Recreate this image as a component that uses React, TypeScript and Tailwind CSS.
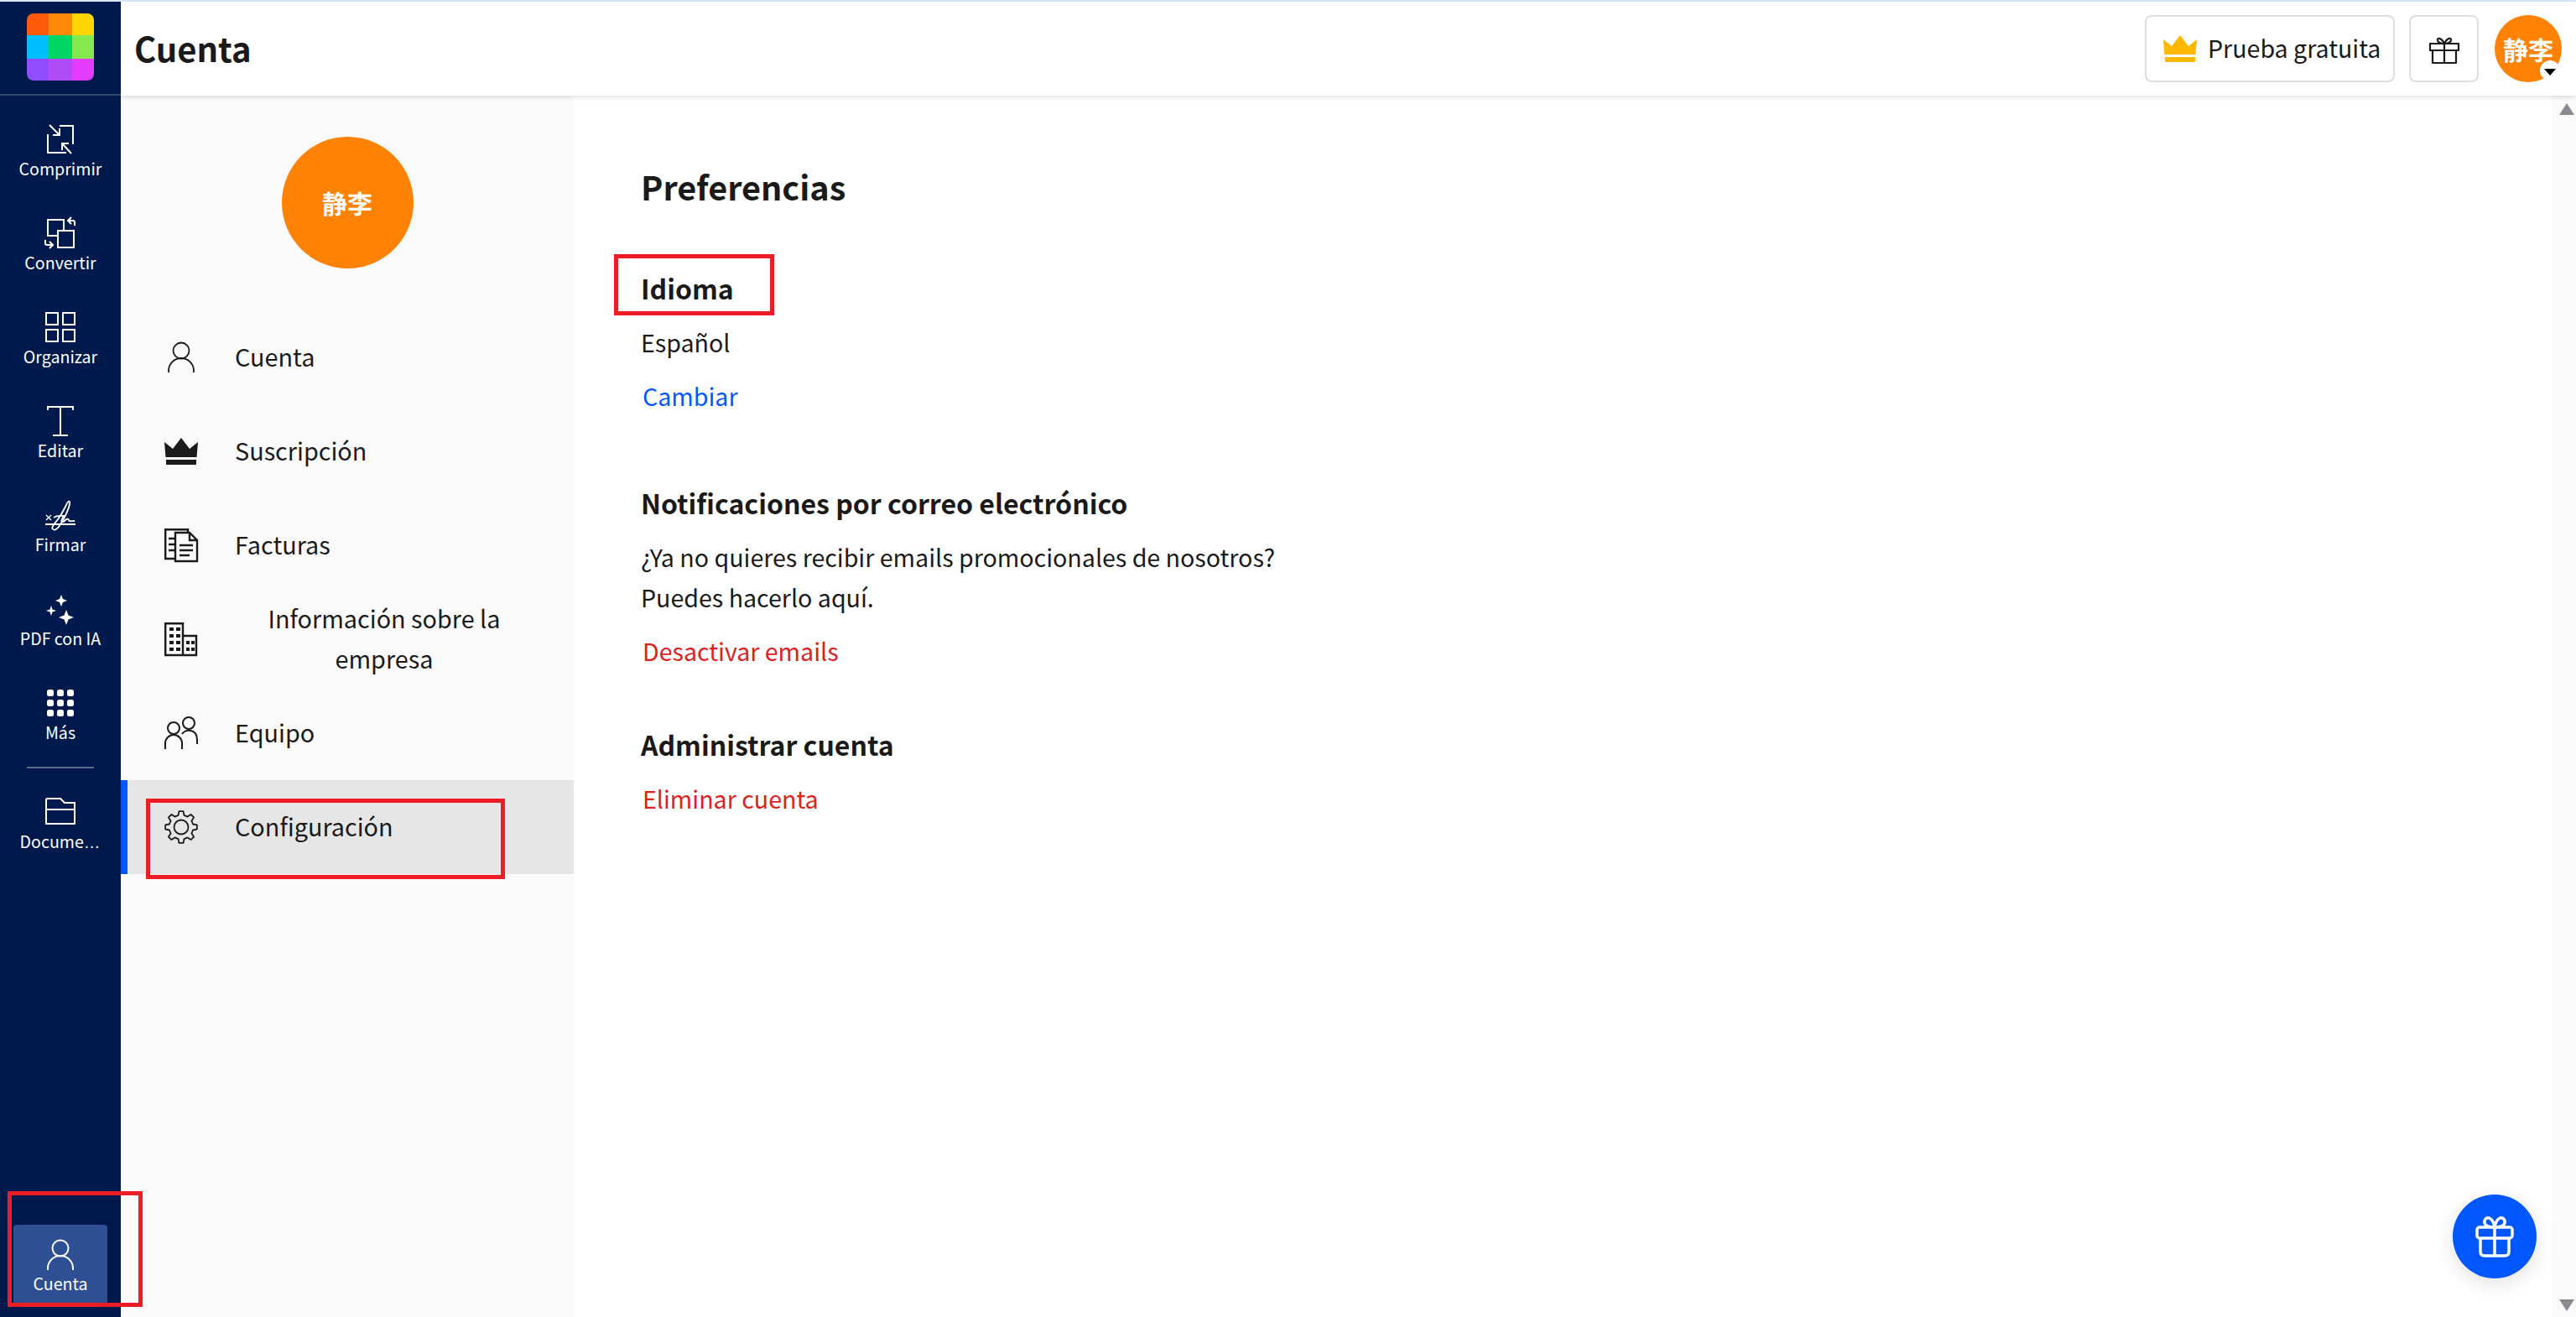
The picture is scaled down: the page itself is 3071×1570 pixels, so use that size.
import type { ReactNode } from 'react'

// ── icons ─────────────────────────────────────────────────────────────────────

function Icon({ children, stroke = 2, className = '' }: { children: ReactNode; stroke?: number; className?: string }) {
  return (
    <svg
      viewBox="0 0 40 40"
      fill="none"
      stroke="currentColor"
      strokeWidth={stroke}
      className={`block h-10 w-10 shrink-0 overflow-visible ${className}`}
    >
      {children}
    </svg>
  )
}

const CompressIcon = () => (
  <Icon>
    <path d="M5 14V36H27M19 4H35V26" />
    <path d="M7 3L19 15M19 7V15H11M33 37L22 25M22 33V25H30" />
  </Icon>
)

const ConvertIcon = () => (
  <Icon>
    <rect x="5" y="4" width="19" height="19" />
    <rect x="17" y="17" width="19" height="20" fill="#001a4d" />
    <path d="M37 11V7Q37 5 35 5H30M33 1L29 5L33 9M2 28V32Q2 34 4 34H10M7 30L11 34L7 38" />
  </Icon>
)

const OrganizeIcon = () => (
  <Icon>
    <rect x="3" y="3" width="14" height="14" />
    <rect x="23" y="3" width="14" height="14" />
    <rect x="3" y="23" width="14" height="14" />
    <rect x="23" y="23" width="14" height="14" />
  </Icon>
)

const EditIcon = () => (
  <Icon>
    <path d="M5 7V3H35V7M20 3V37M11 37H29" />
  </Icon>
)

const SignIcon = () => (
  <Icon stroke={1.8}>
    <path d="M2 31H38" />
    <path d="M3 20L9 26M9 20L3 26" strokeWidth={1.4} />
    <path d="M12 37C9 37 10 33 14 29C20 22 24 14 27 8C29 3 32 2 31 7C30 13 24 26 18 34C15 38 12 38 12 37" />
    <path d="M12 23C16 20 20 21 24 21C22 25 19 28 24 28C27 24 30 24 30 26C30 28 34 27 37 27" />
  </Icon>
)

const SparkleIcon = () => (
  <Icon stroke={0}>
    <g fill="currentColor">
      <path d="M21 3L23 8L28 10L23 12L21 17L19 12L14 10L19 8Z" />
      <path d="M9 16L10.5 20.5L15 22L10.5 23.500L9 28L7.500 23.500L3 22L7.500 20.500Z" />
      <path d="M27 21L29.500 27.500L36 30L29.500 32.500L27 39L24.500 32.500L18 30L24.500 27.500Z" />
    </g>
  </Icon>
)

const DotsIcon = () => (
  <Icon stroke={0}>
    <g fill="currentColor">
      {[4, 16, 28].map(y =>
        [4, 16, 28].map(x => <rect key={`${x}-${y}`} x={x} y={y} width="8" height="8" rx="2.500" />),
      )}
    </g>
  </Icon>
)

const FolderIcon = () => (
  <Icon>
    <path d="M3 34V6Q3 4 5 4H20L25 9H37V34Z M3 17H37" strokeLinejoin="round" />
  </Icon>
)

const PersonIcon = ({ stroke = 2 }: { stroke?: number }) => (
  <Icon stroke={stroke}>
    <circle cx="20" cy="12" r="9.500" />
    <path d="M5 38V36A15 15 0 0 1 35 36V38" />
  </Icon>
)

const CrownIcon = ({ className = '' }: { className?: string }) => (
  <Icon stroke={0} className={className}>
    <g fill="currentColor">
      <path d="M0 9L10 17L20 4L30 17L40 9L38.500 27H1.500Z" />
      <path d="M2 30H38V35Q38 36 37 36H3Q2 36 2 35Z" />
    </g>
  </Icon>
)

const InvoiceIcon = () => (
  <Icon stroke={2.400}>
    <path d="M12 36H1.200V1.200H28V4.500" />
    <path d="M13 5H30L39 14V39H13Z M30 5V14H39" />
    <path d="M18 20H34M18 26H34M18 32H30M5 12H13M5 19H13M5 26H13" />
  </Icon>
)

const BuildingIcon = () => (
  <Icon stroke={2.400}>
    <path d="M1.200 39V1.200H22V39ZM22 16H38V39H22" />
    <g fill="currentColor" stroke="none">
      {[6, 14, 22, 30].map(y =>
        [6, 14].map(x => <rect key={`${x}-${y}`} x={x} y={y} width="5" height="4" />),
      )}
      {[22, 30].map(y =>
        [26, 32].map(x => <rect key={`${x}-${y}`} x={x} y={y} width="4" height="4" />),
      )}
    </g>
  </Icon>
)

const TeamIcon = () => (
  <Icon stroke={2}>
    <circle cx="11" cy="14" r="7" />
    <path d="M1 39V32A10 10 0 0 1 21 32V39" />
    <circle cx="29" cy="8" r="7" />
    <path d="M21 21C24 15 39 14 39 28V33" />
  </Icon>
)

// 8-tooth outline, easier to compute than to write by hand
function gearPath() {
  const pts: string[] = []
  const teeth = 8
  for (let i = 0; i < teeth; i++) {
    const a = (i / teeth) * Math.PI * 2 - Math.PI / 2
    const step = (Math.PI * 2) / teeth
    const spots: [number, number][] = [
      [14.500, a - step * 0.31],
      [19, a - step * 0.17],
      [19, a + step * 0.17],
      [14.500, a + step * 0.31],
    ]
    for (const [r, t] of spots) {
      pts.push(`${(20 + r * Math.cos(t)).toFixed(2)} ${(20 + r * Math.sin(t)).toFixed(2)}`)
    }
  }
  return `M${pts.join('L')}Z`
}

const GearIcon = () => (
  <Icon stroke={1.800}>
    <path d={gearPath()} strokeLinejoin="round" />
    <circle cx="20" cy="20" r="8.500" />
  </Icon>
)

const GiftIcon = () => (
  <Icon stroke={2.200}>
    <path d="M3 14H37V22H3Z M6 22V37H34V22 M20 14V37" strokeLinejoin="round" />
    <path d="M20 14C16 6 11 7 12 10C12.500 13 17 14 20 14C23 14 27.500 13 28 10C29 7 24 6 20 14" />
  </Icon>
)

const GiftRoundIcon = () => (
  <svg viewBox="0 0 46 50" fill="none" stroke="currentColor" strokeWidth="3.500" className="block h-[50px] w-[46px]">
    <rect x="2" y="14" width="42" height="13" rx="3" />
    <path d="M6 27V43Q6 48 11 48H35Q40 48 40 43V27M23 14V48" />
    <path d="M23 14C14 14 10 11 11 6C13 0 21 2 23 14C25 2 33 0 35 6C36 11 32 14 23 14" />
  </svg>
)

function Logo() {
  const cells = [
    'bg-[#ff5a0a]', 'bg-[#ff8a0a]', 'bg-[#ffd400]',
    'bg-[#00bfff]', 'bg-[#00d664]', 'bg-[#84e84f]',
    'bg-[#8f4dff]', 'bg-[#b04cf5]', 'bg-[#e33cff]',
  ]
  return (
    <div className="grid h-20 w-20 grid-cols-[26px_28px_26px] grid-rows-[26px_28px_26px] overflow-hidden rounded-lg">
      {cells.map(c => <div key={c} className={c} />)}
    </div>
  )
}

// ── sidebar ───────────────────────────────────────────────────────────────────

const TOOLS: { label: ReactNode; icon: ReactNode }[] = [
  { label: 'Comprimir', icon: <CompressIcon /> },
  { label: 'Convertir', icon: <ConvertIcon /> },
  { label: 'Organizar', icon: <OrganizeIcon /> },
  { label: 'Editar', icon: <EditIcon /> },
  { label: 'Firmar', icon: <SignIcon /> },
  { label: 'PDF con IA', icon: <SparkleIcon /> },
  { label: 'Más', icon: <DotsIcon /> },
]

function ToolItem({ label, icon }: { label: ReactNode; icon: ReactNode }) {
  return (
    <div className="flex h-[112px] flex-col items-center pt-8 text-white">
      {icon}
      <span className="mt-[2px] whitespace-nowrap text-center text-[19.6px] leading-[26px]">{label}</span>
    </div>
  )
}

function Sidebar() {
  return (
    <aside className="flex h-full w-[144px] shrink-0 flex-col bg-[#001a4d]">
      <div className="flex h-[112px] shrink-0 items-center justify-center border-b-2 border-[#33486f] pb-[2px]">
        <Logo />
      </div>
      {TOOLS.map((t, i) => <ToolItem key={i} {...t} />)}
      <div className="mx-8 mt-[16px] h-[2px] bg-[#5c6c8c]" />
      <ToolItem
        label={<>Docume<span className="font-['Liberation_Sans'] tracking-[1px]">…</span></>}
        icon={<FolderIcon />}
      />
      <div className="mx-4 mb-[15px] mt-auto flex h-[95px] flex-col items-center rounded-[4px] bg-[#2e4f93] pt-4 text-white">
        <PersonIcon />
        <span className="mt-[1px] text-[19.6px] leading-[26px]">Cuenta</span>
      </div>
    </aside>
  )
}

// ── account menu ──────────────────────────────────────────────────────────────

const MENU: { label: string; icon: ReactNode; center?: boolean; active?: boolean }[] = [
  { label: 'Cuenta', icon: <PersonIcon stroke={1.800} /> },
  { label: 'Suscripción', icon: <CrownIcon /> },
  { label: 'Facturas', icon: <InvoiceIcon /> },
  { label: 'Información sobre la empresa', icon: <BuildingIcon />, center: true },
  { label: 'Equipo', icon: <TeamIcon /> },
  { label: 'Configuración', icon: <GearIcon />, active: true },
]

function AccountMenu() {
  return (
    <nav className="h-full w-[540px] shrink-0 bg-[#fafafa]">
      <div className="flex h-[256px] justify-center pt-[49px]">
        <div className="flex h-[157px] w-[157px] items-center justify-center rounded-full bg-[#ff8205] text-[30px] font-bold text-white">
          静李
        </div>
      </div>
      {MENU.map(m => (
        <div
          key={m.label}
          className={`flex h-[112px] items-center gap-[44px] pr-12 text-[28.8px] leading-[48px] text-[#1a1a1a] ${
            m.active ? 'border-l-8 border-[#0057ff] bg-[#e6e6e6] pl-[44px]' : 'pl-[52px]'
          }`}
        >
          {m.icon}
          <span className={`flex-1 pb-[3px] ${m.center ? 'text-center' : ''}`}>{m.label}</span>
        </div>
      ))}
    </nav>
  )
}

// ── page ──────────────────────────────────────────────────────────────────────

function Annotation({ className }: { className: string }) {
  return <div className={`pointer-events-none absolute border-[5px] border-[#ee1c25] ${className}`} />
}

function Header() {
  return (
    <header className="relative z-10 flex h-[112px] shrink-0 items-center bg-white px-4 shadow-[0_2px_6px_rgba(0,0,0,0.12)]">
      <h1 className="pb-[3px] text-[40px] font-bold text-[#1a1a1a]">Cuenta</h1>
      <div className="ml-auto mr-px flex items-center">
        <button className="flex h-20 w-[298px] items-center gap-[13px] rounded-lg border-2 border-[#dedede] pl-5 text-[28.6px] text-[#1a1a1a]">
          <CrownIcon className="text-[#ffb800]" />
          <span className="pb-[2px]">Prueba gratuita</span>
        </button>
        <button className="ml-[17px] flex h-20 w-[83px] items-center justify-center rounded-lg border-2 border-[#dedede] text-[#1a1a1a]">
          <GiftIcon />
        </button>
        <div className="relative ml-[19px] flex h-20 w-20 items-center justify-center rounded-full bg-[#ff8205] text-[30px] font-bold text-white">
          静李
          <span className="absolute bottom-[2px] right-[2px] flex h-6 w-6 items-center justify-center rounded-full bg-white">
            <span className="mt-[3px] h-0 w-0 border-x-[7px] border-t-[8px] border-x-transparent border-t-black" />
          </span>
        </div>
      </div>
    </header>
  )
}

function Scrollbar() {
  return (
    <div className="flex h-full w-[29px] shrink-0 flex-col items-center justify-between bg-[#fafafa] pb-[7px] pl-[6px] pt-[9px]">
      <span className="h-0 w-0 border-x-[9px] border-b-[14px] border-x-transparent border-b-[#8a8a90]" />
      <span className="h-0 w-0 border-x-[9px] border-t-[14px] border-x-transparent border-t-[#8a8a90]" />
    </div>
  )
}

export default function App() {
  return (
    <div className="relative flex h-[1570px] w-[3071px] flex-col overflow-hidden bg-white font-['Noto_Sans_CJK_SC',sans-serif]">
      <div className="h-[2px] shrink-0 bg-[#d6eafb]" />
      <div className="flex min-h-0 flex-1">
        <Sidebar />
        <div className="flex min-w-0 flex-1 flex-col">
          <Header />
          <div className="flex min-h-0 flex-1">
            <AccountMenu />
            <main className="flex-1 pl-[80px] pt-[84px] text-[28.6px] leading-[48px] text-[#1a1a1a]">
              <h2 className="text-[39.6px] font-bold">Preferencias</h2>
              <h3 className="mt-[73px] text-[32px] font-bold">Idioma</h3>
              <p className="mt-[17px]">Español</p>
              <a className="mt-4 block pl-[2px] text-[#0057ff]">Cambiar</a>
              <h3 className="mt-[79px] text-[32px] font-bold">Notificaciones por correo electrónico</h3>
              <p className="mt-[17px]">
                ¿Ya no quieres recibir emails promocionales de nosotros?
                <br />
                Puedes hacerlo aquí.
              </p>
              <a className="mt-4 block pl-[2px] text-[#e0201c]">Desactivar emails</a>
              <h3 className="mt-[63px] text-[32px] font-bold">Administrar cuenta</h3>
              <a className="mt-[17px] block pl-[2px] text-[#e0201c]">Eliminar cuenta</a>
            </main>
            <Scrollbar />
          </div>
        </div>
      </div>

      <button className="absolute left-[2924px] top-[1424px] flex h-[100px] w-[100px] items-center justify-center rounded-full bg-[#0057ff] text-white shadow-[0_6px_24px_rgba(0,0,0,0.12)]">
        <GiftRoundIcon />
      </button>

      {/* Red markup boxes drawn over the screenshot */}
      <Annotation className="left-[9px] top-[1420px] h-[138px] w-[161px]" />
      <Annotation className="left-[174px] top-[952px] h-[96px] w-[428px]" />
      <Annotation className="left-[732px] top-[303px] h-[73px] w-[191px]" />
    </div>
  )
}
